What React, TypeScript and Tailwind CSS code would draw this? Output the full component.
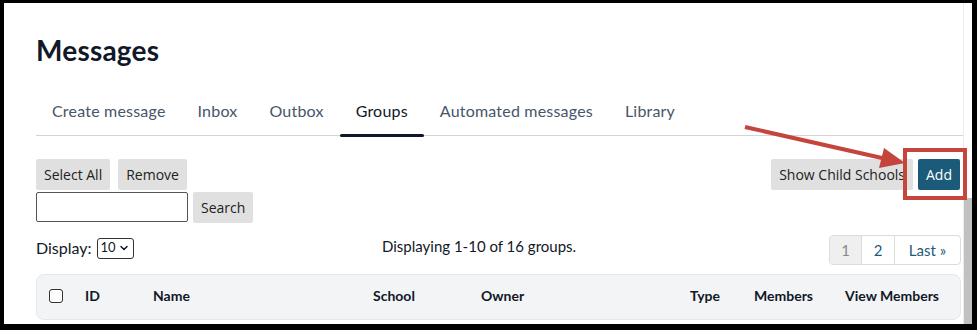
import { ChevronDown } from 'lucide-react'

const TABS = ['Create message', 'Inbox', 'Outbox', 'Groups', 'Automated messages', 'Library']

const COLUMNS = ['ID', 'Name', 'School', 'Owner', 'Type', 'Members', 'View Members']

const btn =
  "h-[31px] px-2 bg-[#e0e0e0] text-[14px] text-[#222] font-['Open_Sans',sans-serif] rounded-[2px]"

export default function App() {
  return (
    <div className="relative w-[977px] h-[330px] bg-black pt-[3px] pl-[4px] pr-[5px] pb-[6px] overflow-hidden">
      <div className="flex h-full bg-white">
        {/* Page */}
        <div className="flex-1 pl-[32px] pr-[2px] font-['Lato',sans-serif]">
          <h1 className="mt-[31px] text-[28px] leading-[32px] font-bold tracking-[0.2px] text-[#111827]">Messages</h1>

          {/* Tabs */}
          <div className="mt-[29px] flex border-b border-[#d4d4d8] -mr-[2px]">
            {TABS.map((tab) => (
              <div
                key={tab}
                className={`px-4 h-[40px] pb-[9px] flex items-center text-[16px] tracking-[0.2px] ${
                  tab === 'Groups'
                    ? 'text-[#111827] relative'
                    : 'text-[#475569]'
                }`}
              >
                {tab}
                {tab === 'Groups' && (
                  <span className="absolute left-0 right-0 -bottom-[2px] h-[3px] rounded-full bg-[#0f172a]" />
                )}
              </div>
            ))}
          </div>

          {/* Toolbar */}
          <div className="mt-[23px] flex justify-between">
            <div>
              <div className="flex gap-2">
                <button className={btn}>Select All</button>
                <button className={btn}>Remove</button>
              </div>
              <div className="mt-[2px] flex gap-[5px]">
                <input className="w-[152px] h-[30px] border border-[#555] rounded-[2px]" />
                <button className={`${btn} h-[30px]`}>Search</button>
              </div>
            </div>
            <div className="flex gap-[5px] pr-[1px]">
              <button className={btn}>Show Child Schools</button>
              <button className="h-[31px] px-[8px] bg-[#1b5a79] text-white text-[14px] font-['Open_Sans',sans-serif] rounded-[2px]">
                Add
              </button>
            </div>
          </div>

          {/* Display row */}
          <div className="mt-[12px] flex items-start text-[15px] text-[#111827]">
            <div className="w-[346px] flex items-center gap-[5px] pt-[1px]">
              <span className="text-[16px]">Display:</span>
              <span className="h-[21px] w-[37px] border border-[#333] rounded-[3px] flex items-center justify-center gap-[2px] text-[13px]">
                10
                <ChevronDown className="w-3 h-3" strokeWidth={3} />
              </span>
            </div>
            <span>Displaying 1-10 of 16 groups.</span>
            <div className="flex-1" />
            <div className="flex h-[30px] border border-[#dcdcdc] rounded-[4px] overflow-hidden text-[#1e5a7a] text-[15px]">
              <span className="w-[31px] flex items-center justify-center bg-[#efefef] text-[#888]">1</span>
              <span className="w-[33px] flex items-center justify-center border-l border-[#dcdcdc]">2</span>
              <span className="w-[66px] flex items-center justify-center border-l border-[#dcdcdc]">Last »</span>
            </div>
          </div>

          {/* Table header */}
          <div className="mt-[9px] h-[46px] pb-[3px] grid grid-cols-[48px_68px_220px_108px_209px_64px_91px_1fr] items-center bg-[#f3f4f6] border border-[#e5e7eb] rounded-[8px] text-[14px] font-bold text-[#111827]">
            <div className="pl-[12px]">
              <span className="block w-[14px] h-[14px] border border-[#333] rounded-[3px] bg-white" />
            </div>
            {COLUMNS.map((c) => (
              <div key={c}>{c}</div>
            ))}
          </div>
        </div>

        {/* Scrollbar */}
        <div className="w-[9px] flex flex-col border-l border-[#ececec]">
          <div className="h-[195px]" />
          <div className="flex-1 bg-[#c1c1c1]" />
        </div>
      </div>

      {/* Annotation: red box + arrow */}
      <div className="absolute left-[903px] top-[148px] w-[64px] h-[52px] border-4 border-[#c5443c]" />
      <svg className="absolute left-0 top-0" width="977" height="330">
        <line x1="745" y1="127" x2="882" y2="158" stroke="#c5443c" strokeWidth="4" />
        <polygon points="905,163 884,148 879,168" fill="#c5443c" />
      </svg>
    </div>
  )
}
